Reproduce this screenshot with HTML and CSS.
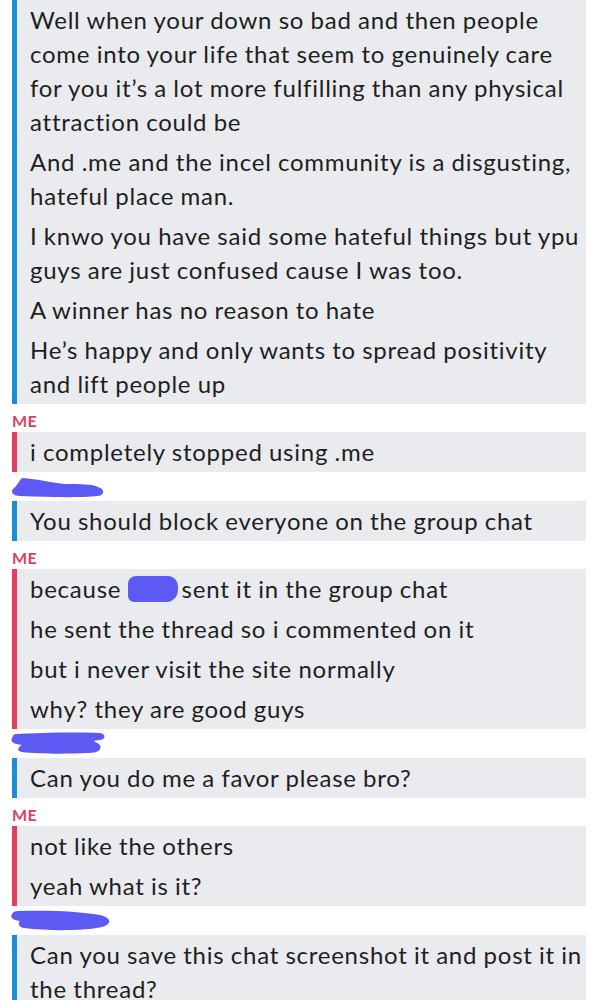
FILE: index.html
```html
<!DOCTYPE html>
<html lang="en">
<head>
  <meta charset="UTF-8">
  <title>Chat</title>
  <meta name="viewport" content="width=device-width, initial-scale=1.0">
  <link rel="stylesheet" href="styles.css">
</head>
<body>

  <div class="chat">

    <div class="group them">
      <div class="msg">Well when your down so bad and then people come into your life that seem to genuinely care for you it’s a lot more fulfilling than any physical attraction could be</div>
      <div class="msg">And .me and the incel community is a disgusting, hateful place man.</div>
      <div class="msg">I knwo you have said some hateful things but ypu guys are just confused cause I was too.</div>
      <div class="msg">A winner has no reason to hate</div>
      <div class="msg">He’s happy and only wants to spread positivity and lift people up</div>
    </div>

    <div class="sender me">ME</div>
    <div class="group mine">
      <div class="msg">i completely stopped using .me</div>
    </div>

    <!-- name scribbled out -->
    <div class="sender redacted">
      <svg width="100" height="24" viewBox="0 0 100 24">
        <path d="M14 3 C30 4 44 8 58 9 C72 9 84 9 90 12 C97 14 97 20 90 21 C70 23 40 22 12 21 C4 21 2 16 6 13 C9 11 10 7 14 3 Z"/>
      </svg>
    </div>
    <div class="group them">
      <div class="msg">You should block everyone on the group chat</div>
    </div>

    <div class="sender me">ME</div>
    <div class="group mine">
      <div class="msg">because <span class="blot"></span>sent it in the group chat</div>
      <div class="msg">he sent the thread so i commented on it</div>
      <div class="msg">but i never visit the site normally</div>
      <div class="msg">why? they are good guys</div>
    </div>

    <div class="sender redacted">
      <svg width="100" height="24" viewBox="0 0 100 24">
        <path d="M8 2 C30 1 60 0 92 1 C98 2 98 7 92 8 C80 9 90 10 92 13 C94 18 90 21 80 21 C60 22 30 22 14 20 C8 19 10 15 14 13 C6 12 2 10 4 6 C5 3 6 2 8 2 Z"/>
      </svg>
    </div>
    <div class="group them">
      <div class="msg">Can you do me a favor please bro?</div>
    </div>

    <div class="sender me">ME</div>
    <div class="group mine">
      <div class="msg">not like the others</div>
      <div class="msg">yeah what is it?</div>
    </div>

    <div class="sender redacted">
      <svg width="106" height="24" viewBox="0 0 106 24">
        <path d="M10 2 C40 1 70 2 92 6 C104 9 104 15 94 18 C76 22 40 22 16 19 C10 18 10 14 12 12 C4 11 2 8 4 5 C5 3 7 2 10 2 Z"/>
      </svg>
    </div>
    <div class="group them">
      <div class="msg">Can you save this chat screenshot it and post it in the thread?</div>
    </div>

  </div>

</body>
</html>
```

FILE: styles.css
```css
/* Grundlayout */
body {
  margin: 0;
  background: #fff;
  color: #1e1f22;
  font-family: Lato, "Open Sans", sans-serif;
}
.chat {
  padding: 0 12px;
}
/* Nachrichten-Gruppen mit farbigem Balken links */
.group {
  background: #e9ebee;
  border-left: 5px solid #1f8dd6;
  padding-left: 13px;
}
.group.mine {
  border-left-color: #e1405c;
}
.msg {
  font-size: 24px;
  line-height: 34px;
  letter-spacing: 0.75px;
  word-spacing: -0.5px;
  padding: 3px 0;
}
/* Absender-Zeilen */
.sender {
  height: 28px;
  display: flex;
  align-items: flex-end;
}
.sender.me {
  color: #d9435e;
  font-size: 16px;
  font-weight: bold;
  line-height: 23px;
  letter-spacing: 0.5px;
}
.sender.redacted {
  height: 29px;
  align-items: center;
  margin-left: -4px;
}
.sender.redacted svg {
  fill: #5d5af3;
}
/* geschwärzter Name im Text */
.blot {
  display: inline-block;
  width: 50px;
  height: 26px;
  margin-right: 4px;
  vertical-align: -4px;
  background: #5d5af3;
  border-radius: 8px 10px 12px 6px;
}
```
